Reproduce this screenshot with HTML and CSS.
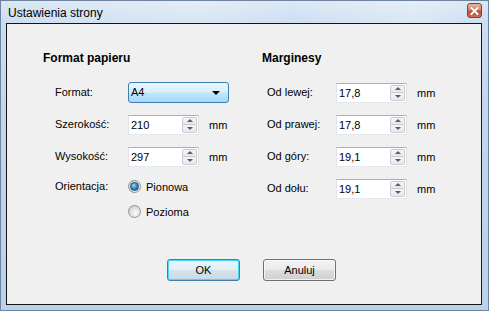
FILE: index.html
```html
<!DOCTYPE html>
<html lang="pl">
<head>
<meta charset="utf-8">
<title>Ustawienia strony</title>
<link rel="stylesheet" href="styles.css">
</head>
<body>
<div class="window">
  <div class="titlebar">
    <span class="title">Ustawienia strony</span>
    <div class="close">
      <svg width="9" height="8" viewBox="0 0 9 8"><path d="M1.5 1 L7.5 7 M7.5 1 L1.5 7" stroke="#5a2015" stroke-width="3" stroke-linecap="square" opacity="0.35"/><path d="M1.5 1 L7.5 7 M7.5 1 L1.5 7" stroke="#fff" stroke-width="2" stroke-linecap="square"/></svg>
    </div>
  </div>
  <div class="client">
    <div class="columns">
      <div class="col col-left">
        <div class="heading">Format papieru</div>
        <div class="rows">
          <div class="row">
            <span class="label">Format:</span>
            <div class="combo"><span class="combo-text">A4</span><span class="combo-arrow"></span></div>
          </div>
          <div class="row">
            <span class="label">Szerokość:</span>
            <div class="spin"><span class="spin-text">210</span><div class="spin-btns"><span class="sb up"></span><span class="sb down"></span></div></div>
            <span class="unit">mm</span>
          </div>
          <div class="row">
            <span class="label">Wysokość:</span>
            <div class="spin"><span class="spin-text">297</span><div class="spin-btns"><span class="sb up"></span><span class="sb down"></span></div></div>
            <span class="unit">mm</span>
          </div>
          <div class="row row-radio">
            <span class="label label-radio">Orientacja:</span>
            <div class="radios">
              <div class="radio-item"><span class="radio checked"></span><span>Pionowa</span></div>
              <div class="radio-item"><span class="radio"></span><span>Pozioma</span></div>
            </div>
          </div>
        </div>
      </div>
      <div class="col col-right">
        <div class="heading">Marginesy</div>
        <div class="rows">
          <div class="row">
            <span class="label">Od lewej:</span>
            <div class="spin"><span class="spin-text">17,8</span><div class="spin-btns"><span class="sb up"></span><span class="sb down"></span></div></div>
            <span class="unit">mm</span>
          </div>
          <div class="row">
            <span class="label">Od prawej:</span>
            <div class="spin"><span class="spin-text">17,8</span><div class="spin-btns"><span class="sb up"></span><span class="sb down"></span></div></div>
            <span class="unit">mm</span>
          </div>
          <div class="row">
            <span class="label">Od góry:</span>
            <div class="spin"><span class="spin-text">19,1</span><div class="spin-btns"><span class="sb up"></span><span class="sb down"></span></div></div>
            <span class="unit">mm</span>
          </div>
          <div class="row">
            <span class="label">Od dołu:</span>
            <div class="spin"><span class="spin-text">19,1</span><div class="spin-btns"><span class="sb up"></span><span class="sb down"></span></div></div>
            <span class="unit">mm</span>
          </div>
        </div>
      </div>
    </div>
    <div class="buttons">
      <div class="btn btn-default">OK</div>
      <div class="btn">Anuluj</div>
    </div>
  </div>
</div>
</body>
</html>
```
FILE: styles.css
```css
* { box-sizing: border-box; }
html, body { margin: 0; padding: 0; }
body {
  width: 489px;
  height: 311px;
  overflow: hidden;
  font-family: "Liberation Sans", Arial, sans-serif;
  font-size: 11px;
  color: #000;
}
.window {
  width: 489px;
  height: 311px;
  display: flex;
  flex-direction: column;
  border: 1px solid #6e849e;
  background: linear-gradient(180deg, #dae7f5 0px, #cbddf0 22px, #c2d6ec 120px, #bcd1ea 100%);
}
.titlebar {
  height: 22px;
  flex: none;
  display: flex;
  justify-content: space-between;
  align-items: flex-start;
  background: linear-gradient(90deg, rgba(255,255,255,0) 0%, rgba(255,255,255,0.25) 40%, rgba(255,255,255,0.05) 60%, rgba(255,255,255,0.3) 85%, rgba(255,255,255,0) 100%);
}
.title {
  font-size: 12px;
  line-height: 14px;
  padding: 5px 0 0 7px;
  color: #000;
}
.close {
  width: 15px;
  height: 15px;
  margin: 2px 6px 0 0;
  border: 1px solid #8b3b2c;
  border-radius: 3px;
  background: linear-gradient(180deg, #eab1a2 0%, #d98670 45%, #c3502f 55%, #cf6f51 100%);
  display: flex;
  align-items: center;
  justify-content: center;
}
.close svg { display: block; }
.client {
  flex: 1;
  margin: 0 6px 5px 5px;
  border: 1px solid #141414;
  background: #f0f0f0;
  display: flex;
  flex-direction: column;
  padding: 27px 0 0 36px;
}
.columns {
  display: grid;
  grid-template-columns: 219px auto;
}
.heading {
  font-weight: bold;
  font-size: 12px;
  line-height: 14px;
  height: 14px;
}
.rows {
  display: flex;
  flex-direction: column;
  gap: 11px;
  margin-top: 17px;
}
.row {
  height: 21px;
  display: flex;
  align-items: center;
}
.col-left .row { padding-left: 12px; }
.col-left .label { width: 73px; }
.col-right .row { padding-left: 5px; }
.col-right .label { width: 69px; }
.label { flex: none; line-height: 13px; }
.unit { margin-left: 10px; }

.combo {
  width: 101px;
  height: 21px;
  border: 1px solid #3c7fb1;
  border-radius: 3px;
  background: linear-gradient(180deg, #eaf6fd 0%, #d9f0fc 45%, #bee6fd 55%, #a7d9f5 100%);
  display: flex;
  align-items: center;
  justify-content: space-between;
  padding: 0 8px 0 2px;
}
.combo-text { line-height: 13px; }
.combo-arrow {
  width: 0;
  height: 0;
  border-left: 4px solid transparent;
  border-right: 4px solid transparent;
  border-top: 4px solid #000;
  margin-top: 1px;
}
.spin {
  width: 71px;
  height: 20px;
  border: 1px solid #abadb3;
  border-left-color: #e2e3ea;
  border-right-color: #dbdfe6;
  border-bottom-color: #e3e9ef;
  background: #fff;
  display: flex;
  align-items: stretch;
}
.spin-text {
  flex: 1;
  padding-left: 2px;
  line-height: 17px;
  padding-top: 1px;
}
.spin-btns {
  width: 15px;
  display: flex;
  flex-direction: column;
  margin: 1px 1px 1px 0;
}
.sb {
  flex: 1;
  border: 1px solid #c9cdd3;
  background: linear-gradient(180deg, #f4f5f7 0%, #e6e8eb 100%);
  display: flex;
  align-items: center;
  justify-content: center;
}
.sb.up { border-bottom-width: 0; border-radius: 2px 2px 0 0; }
.sb.down { border-radius: 0 0 2px 2px; }
.sb::after {
  content: "";
  width: 0;
  height: 0;
  border-left: 3px solid transparent;
  border-right: 3px solid transparent;
}
.sb.up::after { border-bottom: 3px solid #4d5f7d; }
.sb.down::after { border-top: 3px solid #4d5f7d; }

.row-radio {
  height: auto;
  align-items: flex-start;
}
.label-radio { line-height: 17px; }
.radios {
  display: flex;
  flex-direction: column;
  gap: 8px;
}
.radio-item {
  height: 17px;
  display: flex;
  align-items: center;
  gap: 5px;
}
.radio {
  width: 13px;
  height: 13px;
  border-radius: 50%;
  border: 1px solid #8f9192;
  background: radial-gradient(circle at 60% 65%, #fbfbfb 0%, #e6e6e6 40%, #c9c9c9 100%);
  display: flex;
  align-items: center;
  justify-content: center;
}
.radio.checked::after {
  content: "";
  width: 7px;
  height: 7px;
  border-radius: 50%;
  background: radial-gradient(circle at 40% 35%, #9fe0f4 0%, #3b8fc2 45%, #1c4e7d 100%);
  border: 0.5px solid #1b4a73;
}
.buttons {
  margin-top: auto;
  margin-bottom: 23px;
  margin-left: 124px;
  display: flex;
  gap: 23px;
}
.btn {
  width: 73px;
  height: 22px;
  border: 1px solid #707070;
  border-radius: 3px;
  background: linear-gradient(180deg, #f2f2f2 0%, #ebebeb 48%, #dddddd 52%, #cfcfcf 100%);
  box-shadow: inset 0 0 0 1px rgba(255,255,255,0.7);
  display: flex;
  align-items: center;
  justify-content: center;
  line-height: 13px;
}
.btn-default {
  border-color: #3c7fb1;
  box-shadow: inset 0 0 0 1px #48d8fb;
  background: linear-gradient(180deg, #eaf6fd 0%, #e4eef6 48%, #d7e3ec 52%, #c9d8e3 100%);
}
```
